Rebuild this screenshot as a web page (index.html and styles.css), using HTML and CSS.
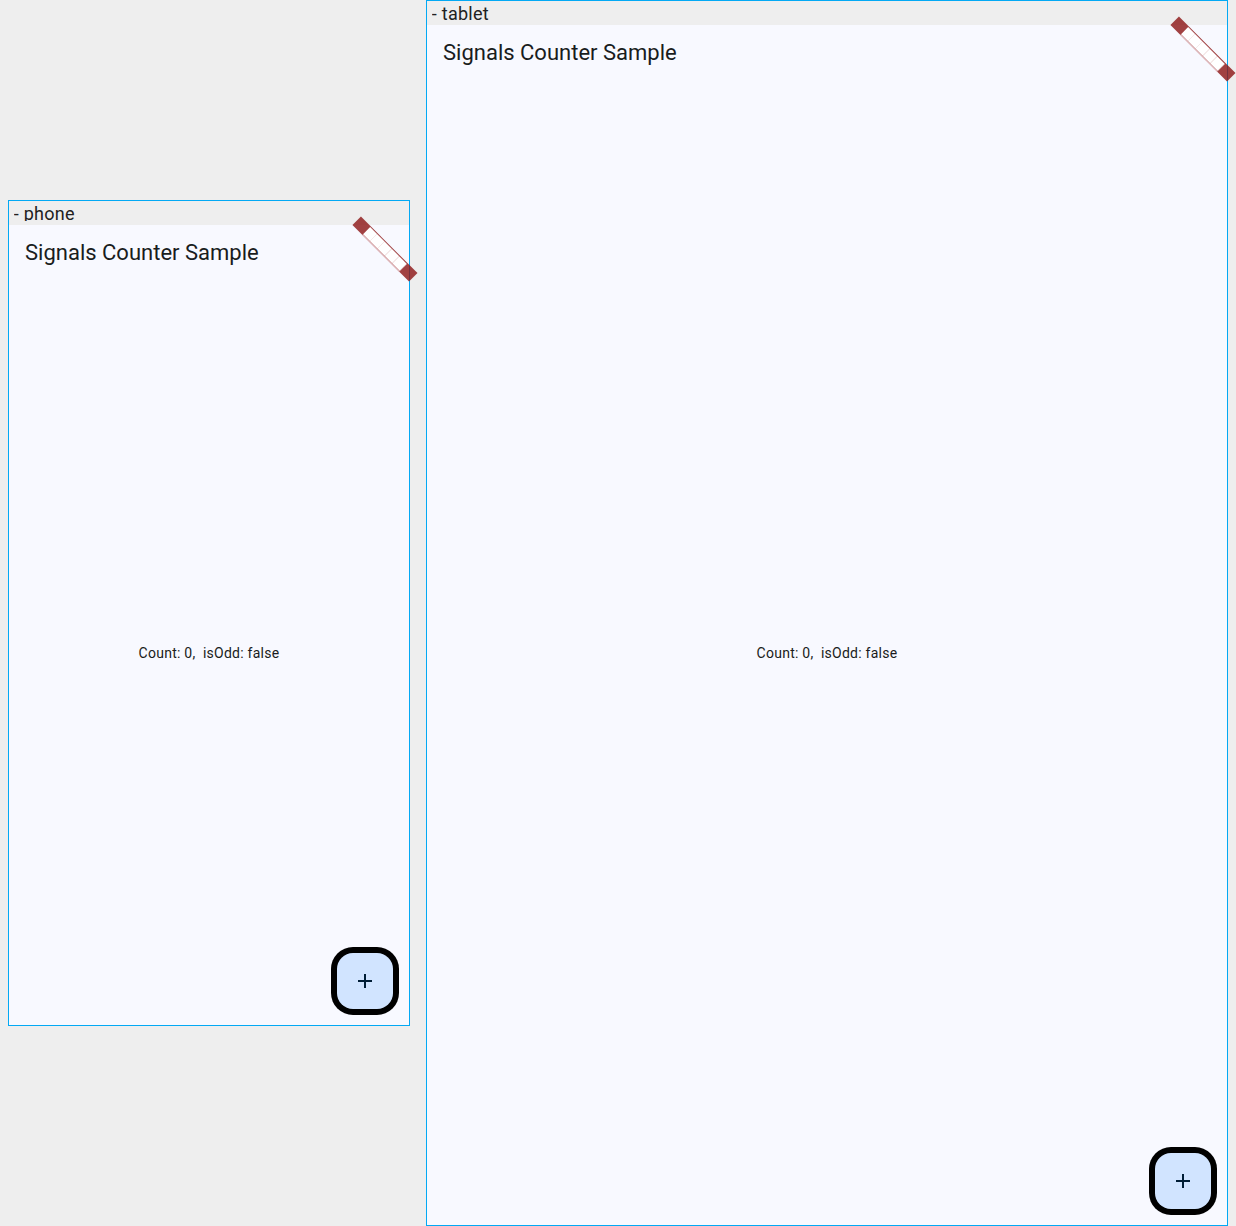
FILE: index.html
```
<!DOCTYPE html>
<html lang="en">
<head>
<meta charset="utf-8">
<title>Signals Counter Sample</title>
<link rel="stylesheet" href="styles.css">
</head>
<body>
<main class="devices">
  <section class="device phone">
    <header class="device-name"><div class="device-label"><span>- phone</span></div></header>
    <div class="screen">
      <h1 class="app-bar"><span>Signals Counter Sample</span></h1>
      <p class="count"><span>Count: 0,&nbsp; isOdd: false</span></p>
      <button class="fab" aria-label="Increment"><svg width="24" height="24" viewBox="0 0 24 24"><path d="M19 13h-6v6h-2v-6H5v-2h6V5h2v6h6v2z"/></svg></button>
      <div class="banner"><div class="banner-blocks"></div></div>
    </div>
  </section>
  <section class="device tablet">
    <header class="device-name"><div class="device-label"><span>- tablet</span></div></header>
    <div class="screen">
      <h1 class="app-bar"><span>Signals Counter Sample</span></h1>
      <p class="count"><span>Count: 0,&nbsp; isOdd: false</span></p>
      <button class="fab" aria-label="Increment"><svg width="24" height="24" viewBox="0 0 24 24"><path d="M19 13h-6v6h-2v-6H5v-2h6V5h2v6h6v2z"/></svg></button>
      <div class="banner"><div class="banner-blocks"></div></div>
    </div>
  </section>
</main>
</body>
</html>
```
FILE: styles.css
```
* { box-sizing: border-box; }

body {
  margin: 0;
  background: #eeeeee;
  color: #191c20;
  font-family: Roboto, sans-serif;
  overflow: hidden;
}

.devices {
  display: flex;
  align-items: center;
  gap: 16px;
  height: 1226px;
  padding: 0 8px;
}

.device {
  flex: none;
  display: flex;
  flex-direction: column;
  border: 1px solid #03a9f4;
}

.phone { width: 402px; height: 826px; }
.tablet { width: 802px; height: 1226px; }

.device-name {
  flex: none;
  height: 24px;
  padding: 4px 4px 4px 4.8px;
}

.device-label {
  height: 16px;
  overflow: hidden;
  font-size: 18px;
  line-height: 18px;
  letter-spacing: 0.25px;
  color: #212121;
}

.screen {
  position: relative;
  flex: 1;
  display: flex;
  flex-direction: column;
  background: #f8f9ff;
}

.app-bar {
  flex: none;
  display: flex;
  align-items: center;
  height: 56px;
  margin: 0;
  padding: 0 16px;
  font-size: 22px;
  font-weight: 400;
  line-height: 28px;
}

.count {
  flex: 1;
  display: flex;
  align-items: center;
  justify-content: center;
  margin: 0;
  font-size: 14px;
  line-height: 20px;
  letter-spacing: 0.25px;
}

/* Floats above the screen content. */
.fab {
  position: absolute;
  right: 16px;
  bottom: 16px;
  display: grid;
  place-items: center;
  width: 56px;
  height: 56px;
  padding: 0;
  border: 0;
  border-radius: 16px;
  background: #d1e4ff;
  box-shadow: 0 0 0 6px #000;
  fill: #001d36;
}

/* Debug ribbon, turned about the top right corner of the screen. */
.banner {
  position: absolute;
  top: 28px;
  right: -40px;
  display: flex;
  justify-content: center;
  width: 80px;
  height: 12px;
  padding-top: 1px;
  transform: rotate(45deg);
  transform-origin: 40px -28px;
  background: rgba(141, 22, 22, 0.8135);
}

.banner-blocks {
  width: 52px;
  height: 11px;
  border-bottom: 1px solid #e2bcbf;
  background: repeating-linear-gradient(90deg, #fff 0 9.4px, #f5eaea 9.4px 10.4px);
}
```
